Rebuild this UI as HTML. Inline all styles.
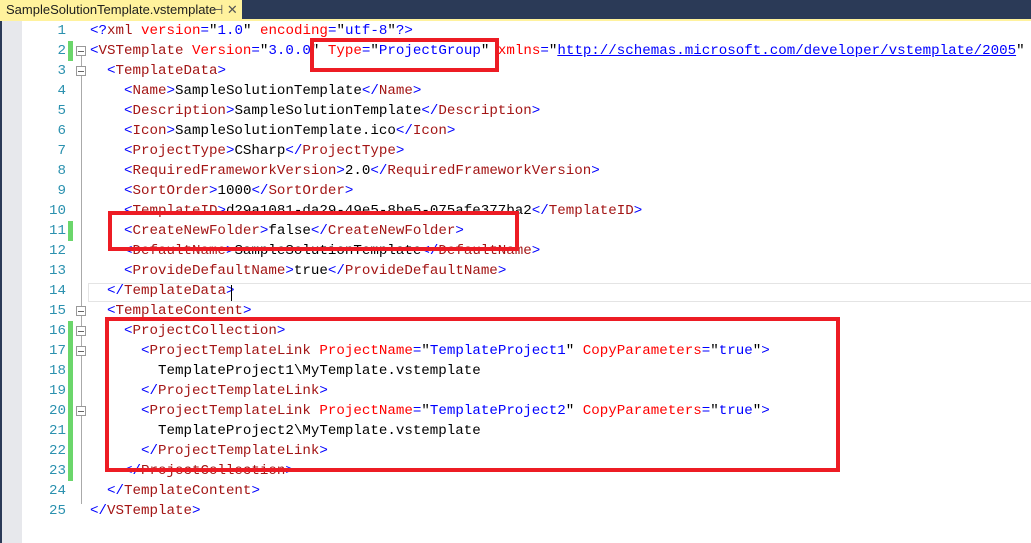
<!DOCTYPE html>
<html><head><meta charset="utf-8"><style>
body{margin:0;width:1031px;height:543px;overflow:hidden;background:#fff;position:relative;font-family:"Liberation Mono",monospace;}
.top{position:absolute;left:0;top:0;width:1031px;height:20px;background:#2b3a57;}
.yl{position:absolute;left:0;top:19px;width:1031px;height:2px;background:#fff29d;}
.tab{position:absolute;left:0;top:0;width:242px;height:21px;background:#fff29d;font:13px "Liberation Sans",sans-serif;color:#1e1e1e;line-height:20px;padding-left:6px;box-sizing:border-box;}
.tab span{position:absolute;left:212px;color:#555;}
.lstrip{position:absolute;left:0;top:21px;width:22px;height:522px;background:#e7e8ec;border-left:2px solid #2b3a57;box-sizing:border-box;}
.ln{position:absolute;left:30px;width:36px;text-align:right;color:#2b91af;font-size:14.17px;line-height:20px;}
.code{position:absolute;left:90px;font-size:14.17px;line-height:20px;white-space:pre;color:#000;}
.b{color:#0000ff}.t{color:#a31515}.a{color:#ff0000}.u{color:#0000ff;text-decoration:underline}
.g{position:absolute;left:68px;width:5px;background:#6bd66b;}
.f{position:absolute;left:76px;width:8px;height:8px;border:1px solid #999;background:#fff;}
.f:after{content:"";position:absolute;left:1px;top:3.5px;width:6px;height:1px;background:#666;}
.vl{position:absolute;left:81px;width:1px;background:#aaa;}
.box{position:absolute;border:4px solid #ed1c24;box-sizing:border-box;}
</style></head><body>
<div class="top"></div><div class="yl"></div>
<div class="tab">SampleSolutionTemplate.vstemplate<span>⊣ ✕</span></div>
<div class="lstrip"></div>
<div style="position:absolute;left:88px;top:283px;width:943px;height:19px;border:1px solid #e4e4e4;border-right:none;box-sizing:border-box"></div>
<div class="g" style="top:41px;height:20px"></div>
<div class="g" style="top:221px;height:20px"></div>
<div class="g" style="top:321px;height:160px"></div>
<div class="vl" style="top:50px;height:454px"></div>
<div class="f" style="top:46px"></div><div class="f" style="top:66px"></div>
<div class="f" style="top:306px"></div><div class="f" style="top:326px"></div>
<div class="f" style="top:346px"></div><div class="f" style="top:406px"></div>
<div class="code" style="top:21px"><span class="b">&lt;?</span><span class="t">xml</span> <span class="a">version</span><span class="b">=</span>"<span class="b">1.0</span>" <span class="a">encoding</span><span class="b">=</span>"<span class="b">utf-8</span>"<span class="b">?&gt;</span>
<span class="b">&lt;</span><span class="t">VSTemplate</span> <span class="a">Version</span><span class="b">=</span>"<span class="b">3.0.0</span>" <span class="a">Type</span><span class="b">=</span>"<span class="b">ProjectGroup</span>" <span class="a">xmlns</span><span class="b">=</span>"<span class="u">http://schemas.microsoft.com/developer/vstemplate/2005</span>" <span class="a">xmlns</span>
  <span class="b">&lt;</span><span class="t">TemplateData</span><span class="b">&gt;</span>
    <span class="b">&lt;</span><span class="t">Name</span><span class="b">&gt;</span>SampleSolutionTemplate<span class="b">&lt;/</span><span class="t">Name</span><span class="b">&gt;</span>
    <span class="b">&lt;</span><span class="t">Description</span><span class="b">&gt;</span>SampleSolutionTemplate<span class="b">&lt;/</span><span class="t">Description</span><span class="b">&gt;</span>
    <span class="b">&lt;</span><span class="t">Icon</span><span class="b">&gt;</span>SampleSolutionTemplate.ico<span class="b">&lt;/</span><span class="t">Icon</span><span class="b">&gt;</span>
    <span class="b">&lt;</span><span class="t">ProjectType</span><span class="b">&gt;</span>CSharp<span class="b">&lt;/</span><span class="t">ProjectType</span><span class="b">&gt;</span>
    <span class="b">&lt;</span><span class="t">RequiredFrameworkVersion</span><span class="b">&gt;</span>2.0<span class="b">&lt;/</span><span class="t">RequiredFrameworkVersion</span><span class="b">&gt;</span>
    <span class="b">&lt;</span><span class="t">SortOrder</span><span class="b">&gt;</span>1000<span class="b">&lt;/</span><span class="t">SortOrder</span><span class="b">&gt;</span>
    <span class="b">&lt;</span><span class="t">TemplateID</span><span class="b">&gt;</span>d29a1081-da29-49e5-8be5-075afe377ba2<span class="b">&lt;/</span><span class="t">TemplateID</span><span class="b">&gt;</span>
    <span class="b">&lt;</span><span class="t">CreateNewFolder</span><span class="b">&gt;</span>false<span class="b">&lt;/</span><span class="t">CreateNewFolder</span><span class="b">&gt;</span>
    <span class="b">&lt;</span><span class="t">DefaultName</span><span class="b">&gt;</span>SampleSolutionTemplate<span class="b">&lt;/</span><span class="t">DefaultName</span><span class="b">&gt;</span>
    <span class="b">&lt;</span><span class="t">ProvideDefaultName</span><span class="b">&gt;</span>true<span class="b">&lt;/</span><span class="t">ProvideDefaultName</span><span class="b">&gt;</span>
  <span class="b">&lt;/</span><span class="t">TemplateData</span><span class="b">&gt;</span>
  <span class="b">&lt;</span><span class="t">TemplateContent</span><span class="b">&gt;</span>
    <span class="b">&lt;</span><span class="t">ProjectCollection</span><span class="b">&gt;</span>
      <span class="b">&lt;</span><span class="t">ProjectTemplateLink</span> <span class="a">ProjectName</span><span class="b">=</span>"<span class="b">TemplateProject1</span>" <span class="a">CopyParameters</span><span class="b">=</span>"<span class="b">true</span>"<span class="b">&gt;</span>
        TemplateProject1\MyTemplate.vstemplate
      <span class="b">&lt;/</span><span class="t">ProjectTemplateLink</span><span class="b">&gt;</span>
      <span class="b">&lt;</span><span class="t">ProjectTemplateLink</span> <span class="a">ProjectName</span><span class="b">=</span>"<span class="b">TemplateProject2</span>" <span class="a">CopyParameters</span><span class="b">=</span>"<span class="b">true</span>"<span class="b">&gt;</span>
        TemplateProject2\MyTemplate.vstemplate
      <span class="b">&lt;/</span><span class="t">ProjectTemplateLink</span><span class="b">&gt;</span>
    <span class="b">&lt;/</span><span class="t">ProjectCollection</span><span class="b">&gt;</span>
  <span class="b">&lt;/</span><span class="t">TemplateContent</span><span class="b">&gt;</span>
<span class="b">&lt;/</span><span class="t">VSTemplate</span><span class="b">&gt;</span></div>
<div class="ln" style="top:21px">1<br>2<br>3<br>4<br>5<br>6<br>7<br>8<br>9<br>10<br>11<br>12<br>13<br>14<br>15<br>16<br>17<br>18<br>19<br>20<br>21<br>22<br>23<br>24<br>25</div>
<div style="position:absolute;left:231px;top:285px;width:1px;height:16px;background:#000"></div>
<div class="box" style="left:310px;top:38px;width:189px;height:34px"></div>
<div class="box" style="left:108px;top:211px;width:411px;height:40px"></div>
<div class="box" style="left:105px;top:317px;width:735px;height:155px"></div>
</body></html>
